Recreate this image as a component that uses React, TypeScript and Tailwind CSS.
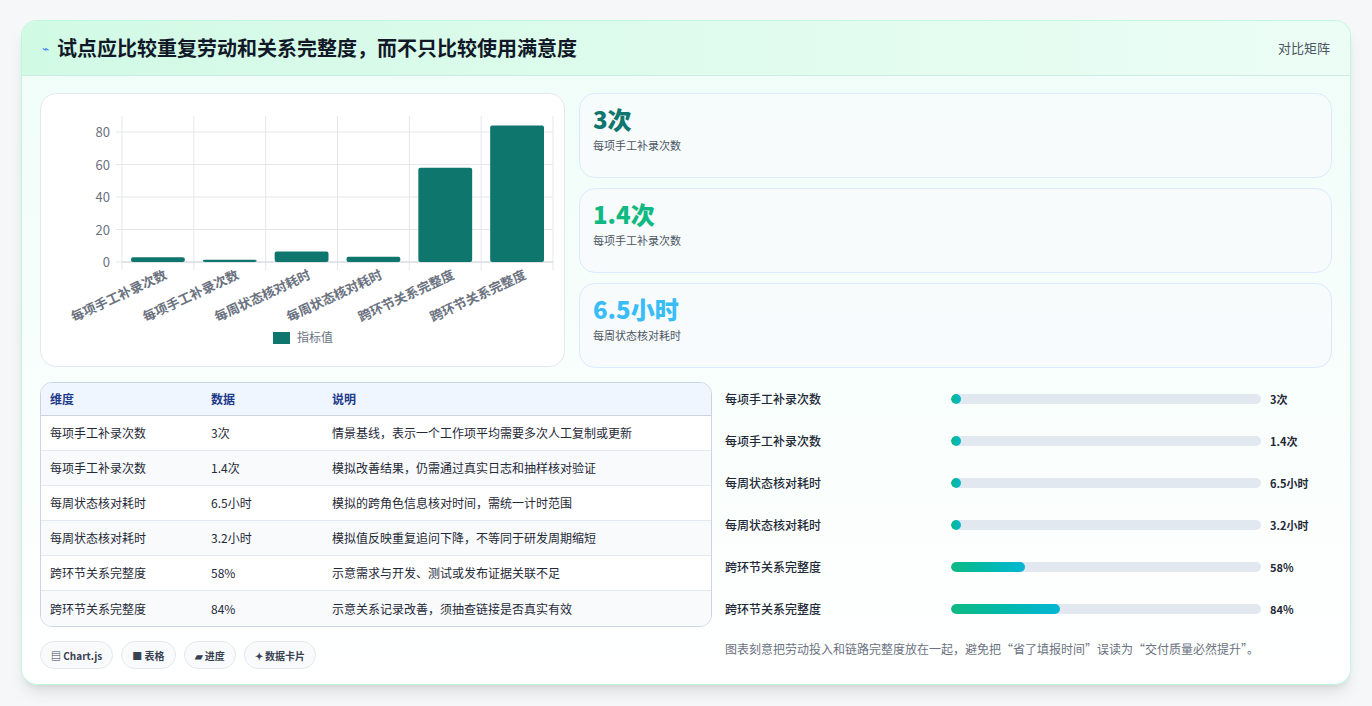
const font = { fontFamily: '"Noto Sans CJK SC", "Noto Sans", sans-serif' };

const rows = [
  ["每项手工补录次数", "3次", "情景基线，表示一个工作项平均需要多次人工复制或更新", 3],
  ["每项手工补录次数", "1.4次", "模拟改善结果，仍需通过真实日志和抽样核对验证", 1.4],
  ["每周状态核对耗时", "6.5小时", "模拟的跨角色信息核对时间，需统一计时范围", 6.5],
  ["每周状态核对耗时", "3.2小时", "模拟值反映重复追问下降，不等同于研发周期缩短", 3.2],
  ["跨环节关系完整度", "58%", "示意需求与开发、测试或发布证据关联不足", 58],
  ["跨环节关系完整度", "84%", "示意关系记录改善，须抽查链接是否真实有效", 84],
] as const;

function Chart() {
  const x0 = 81, x1 = 512, y0 = 168, top = 22;
  const scale = (y0 - 38) / 80;
  const w = (x1 - x0) / 6;
  return (
    <svg width="524" height="272" viewBox="0 0 524 272">
      {[0, 20, 40, 60, 80].map((v) => {
        const y = y0 - v * scale;
        return (
          <g key={v}>
            <line x1={x0 - 6} x2={x1} y1={y} y2={y} stroke="#e5e7eb" />
            <text x={x0 - 12} y={y + 5} textAnchor="end" fontSize="13" fill="#6b7280">{v}</text>
          </g>
        );
      })}
      {Array.from({ length: 7 }).map((_, i) => (
        <line key={i} x1={x0 + i * w} x2={x0 + i * w} y1={top} y2={y0 + 8} stroke="#e5e7eb" />
      ))}
      <line x1={x0} x2={x1} y1={y0} y2={y0} stroke="#d1d5db" />
      {rows.map((r, i) => {
        const h = r[3] * scale;
        const lx = x0 + i * w + w / 2 + 10;
        return (
          <g key={i}>
            <rect x={x0 + i * w + 9} y={y0 - h} width={w - 18} height={h} rx="2" fill="#0f766e" />
            <text
              x={lx}
              y={y0 + 16}
              textAnchor="end"
              fontSize="13"
              fontWeight="600"
              fill="#6b7280"
              transform={`rotate(-25 ${lx} ${y0 + 16})`}
            >
              {r[0]}
            </text>
          </g>
        );
      })}
      <rect x="232" y="238" width="17" height="12" fill="#0f766e" />
      <text x="256" y="248" fontSize="12" fill="#6b7280">指标值</text>
    </svg>
  );
}

const stats = [
  ["3次", "text-[#0f766e]"],
  ["1.4次", "text-[#10b981]"],
  ["6.5小时", "text-[#38bdf8]"],
];
const statLabels = ["每项手工补录次数", "每项手工补录次数", "每周状态核对耗时"];
const fills = [1, 1, 1, 1, 24, 35];

export default function App() {
  return (
    <div className="min-h-[706px] bg-[#f6f7f8] px-[21px] pt-[20px]" style={font}>
      <div className="w-[1330px] h-[665px] rounded-2xl border border-[#a7f3d0]/70 bg-gradient-to-b from-[#effdf8] to-white shadow-lg overflow-hidden">
        <div className="h-[55px] flex items-center justify-between px-5 bg-gradient-to-r from-[#d1fae5] to-[#ecfdf5] border-b border-[#ccebe4]">
          <div className="flex items-center gap-2">
            <span className="text-[#3b82f6] text-xs">⌁</span>
            <span className="text-[20px] font-bold text-[#111827]">试点应比较重复劳动和关系完整度，而不只比较使用满意度</span>
          </div>
          <span className="text-[13px] text-[#4b5563]">对比矩阵</span>
        </div>
        <div className="px-[18px] pt-[17px]">
          <div className="flex gap-[14px]">
            <div className="w-[525px] h-[274px] rounded-2xl border border-[#e2e8f0] bg-white">
              <Chart />
            </div>
            <div className="flex-1 flex flex-col gap-[10px]">
              {stats.map((s, i) => (
                <div key={i} className="h-[85px] rounded-2xl border border-[#dbeafe] bg-[#f8fafc]/80 px-[13px] pt-[9px]">
                  <div className={`text-[24px] font-extrabold leading-[32px] ${s[1]}`}>{s[0]}</div>
                  <div className="text-[11px] text-[#4b5563] mt-[2px]">{statLabels[i]}</div>
                </div>
              ))}
            </div>
          </div>
          <div className="flex gap-[13px] mt-[14px]">
            <div className="w-[672px]">
              <div className="rounded-xl border border-[#cbd5e1] overflow-hidden text-[12px] text-[#1f2937]">
                <div className="flex h-[33px] items-center bg-[#eff6ff] border-b border-[#cbd5e1] text-[#1e3a8a] font-semibold">
                  <div className="w-[161px] pl-[9px]">维度</div>
                  <div className="w-[121px] pl-[9px]">数据</div>
                  <div className="pl-[9px]">说明</div>
                </div>
                {rows.map((r, i) => (
                  <div key={i} className={`flex h-[35px] items-center ${i < 5 ? "border-b border-[#e2e8f0]" : ""} ${i % 2 ? "bg-[#f8fafc]" : "bg-white"}`}>
                    <div className="w-[161px] pl-[9px]">{r[0]}</div>
                    <div className="w-[121px] pl-[9px]">{r[1]}</div>
                    <div className="pl-[9px]">{r[2]}</div>
                  </div>
                ))}
              </div>
              <div className="flex gap-2 mt-[14px] text-[10px] font-semibold text-[#374151]">
                {["▤ Chart.js", "■ 表格", "▰ 进度", "✦ 数据卡片"].map((c) => (
                  <span key={c} className="h-[28px] px-[10px] flex items-center rounded-full border border-[#e5e7eb] bg-[#f9fafb]">{c}</span>
                ))}
              </div>
            </div>
            <div className="flex-1 -mt-[4px]">
              {rows.map((r, i) => (
                <div key={i} className="h-[42px] flex items-center text-[12px] font-medium text-[#1f2937]">
                  <div className="w-[226px]">{r[0]}</div>
                  <div className="w-[310px] h-[10px] rounded-full bg-[#e2e8f0] overflow-hidden">
                    <div className="h-full rounded-full bg-gradient-to-r from-[#10b981] to-[#06b6d4] min-w-[10px]" style={{ width: `${fills[i]}%` }} />
                  </div>
                  <div className="pl-[9px] font-bold text-[11px]">{r[1]}</div>
                </div>
              ))}
              <div className="mt-[10px] text-[12px] text-[#6b7280]">图表刻意把劳动投入和链路完整度放在一起，避免把“省了填报时间”误读为“交付质量必然提升”。</div>
            </div>
          </div>
        </div>
      </div>
    </div>
  );
}
